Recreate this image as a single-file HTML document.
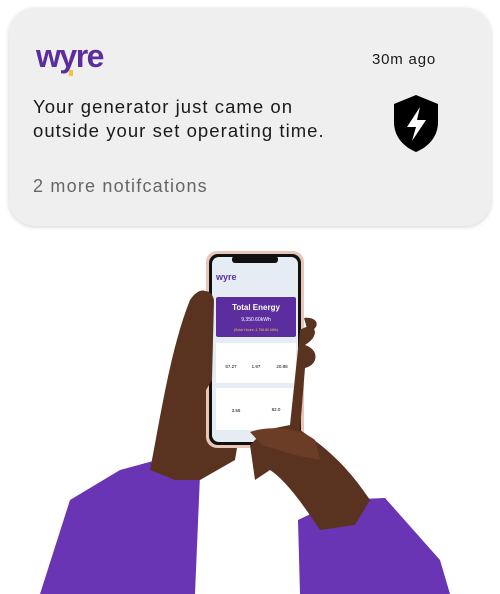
<!DOCTYPE html>
<html><head><style>
body{margin:0;width:500px;height:594px;background:#fff;overflow:hidden;position:relative;font-family:"Liberation Sans",sans-serif}
.card{position:absolute;left:9px;top:8px;width:482px;height:218px;background:#efefef;border-radius:26px;box-shadow:0 1px 4px rgba(0,0,0,.18)}
.t{position:absolute;color:#1a1a1a;white-space:nowrap}
</style></head><body>
<div class="card"></div>
<div class="t" style="left:36px;top:38px;font-size:32px;font-weight:bold;color:#5b2d9e;letter-spacing:-1.5px">wyre</div>
<div style="position:absolute;left:69px;top:70px;width:4px;height:6px;background:#f5c242"></div>
<div class="t" style="left:372px;top:51px;font-size:15px;letter-spacing:0.8px">30m ago</div>
<div class="t" style="left:33px;top:95px;font-size:18.5px;line-height:24px;letter-spacing:1.05px">Your generator just came on<br>outside your set operating time.</div>
<div class="t" style="left:33px;top:176px;font-size:18px;color:#666;letter-spacing:1.2px">2 more notifcations</div>
<svg style="position:absolute;left:390px;top:94px" width="52" height="60" viewBox="0 0 52 60">
<path d="M26 1 L48 10 V28 C48 43 38 53 26 58 C14 53 4 43 4 28 V10 Z" fill="#000"/>
<path d="M30 13 L17 33 H26 L22 47 L36 26 H27 Z" fill="#fff"/>
</svg>
<svg style="position:absolute;left:0;top:240px" width="500" height="354" viewBox="0 240 500 354">
<path d="M40 594 L70 500 L120 470 L175 455 L200 475 L195 594 Z" fill="#6a35b5"/>
<path d="M300 594 L298 520 L340 500 L385 498 L440 560 L450 594 Z" fill="#6a35b5"/>
<path d="M150 470 C160 420 170 350 190 300 C200 285 210 290 210 300 L215 390 L240 430 L235 460 L200 480 L175 480 Z" fill="#5a3320"/>
<rect x="206" y="251" width="98" height="197" rx="11" fill="#e8c7b8"/>
<rect x="209" y="254" width="92" height="191" rx="9" fill="#111"/>
<rect x="212" y="257" width="86" height="185" rx="7" fill="#e6ecf4"/>
<rect x="232" y="256" width="46" height="7" rx="3" fill="#111"/>
<text x="216" y="280" font-size="9" font-weight="bold" fill="#5b2d9e" font-family="Liberation Sans">wyre</text>
<rect x="216" y="297" width="80" height="40" rx="2" fill="#5b2d9e"/>
<text x="256" y="310" font-size="8" font-weight="bold" fill="#fff" text-anchor="middle" font-family="Liberation Sans">Total Energy</text>
<text x="256" y="321" font-size="5" fill="#fff" text-anchor="middle" font-family="Liberation Sans">9,350.60kWh</text>
<text x="256" y="331" font-size="3.5" fill="#f5c242" text-anchor="middle" font-family="Liberation Sans">(Solar Hours: 4,756.80 kWh)</text>
<rect x="216" y="343" width="80" height="40" fill="#fff"/>
<text x="231" y="368" font-size="4.5" text-anchor="middle" font-family="Liberation Sans">57.27</text>
<text x="256" y="368" font-size="4.5" text-anchor="middle" font-family="Liberation Sans">1.97</text>
<text x="282" y="368" font-size="4.5" text-anchor="middle" font-family="Liberation Sans">20.88</text>
<rect x="216" y="388" width="80" height="42" fill="#fff"/>
<text x="236" y="412" font-size="4.5" text-anchor="middle" font-family="Liberation Sans">3.55</text>
<text x="276" y="411" font-size="4.5" text-anchor="middle" font-family="Liberation Sans">82.0</text>
<path d="M192 310 C198 290 210 285 214 300 L212 380 L200 400 Z" fill="#5a3320"/>
<path d="M300 330 C315 320 322 335 305 345 C320 350 318 365 305 368 L300 430 C330 450 350 470 370 500 L355 525 L320 530 C300 500 285 480 270 470 L255 480 L250 445 L265 430 L290 425 Z" fill="#5a3320"/>
<path d="M250 432 C270 425 300 428 315 440 L320 460 L295 455 L262 445 Z" fill="#6b3d27"/>
<path d="M304 318 C318 316 322 328 308 332 Z" fill="#5a3320"/>
</svg>
</body></html>
